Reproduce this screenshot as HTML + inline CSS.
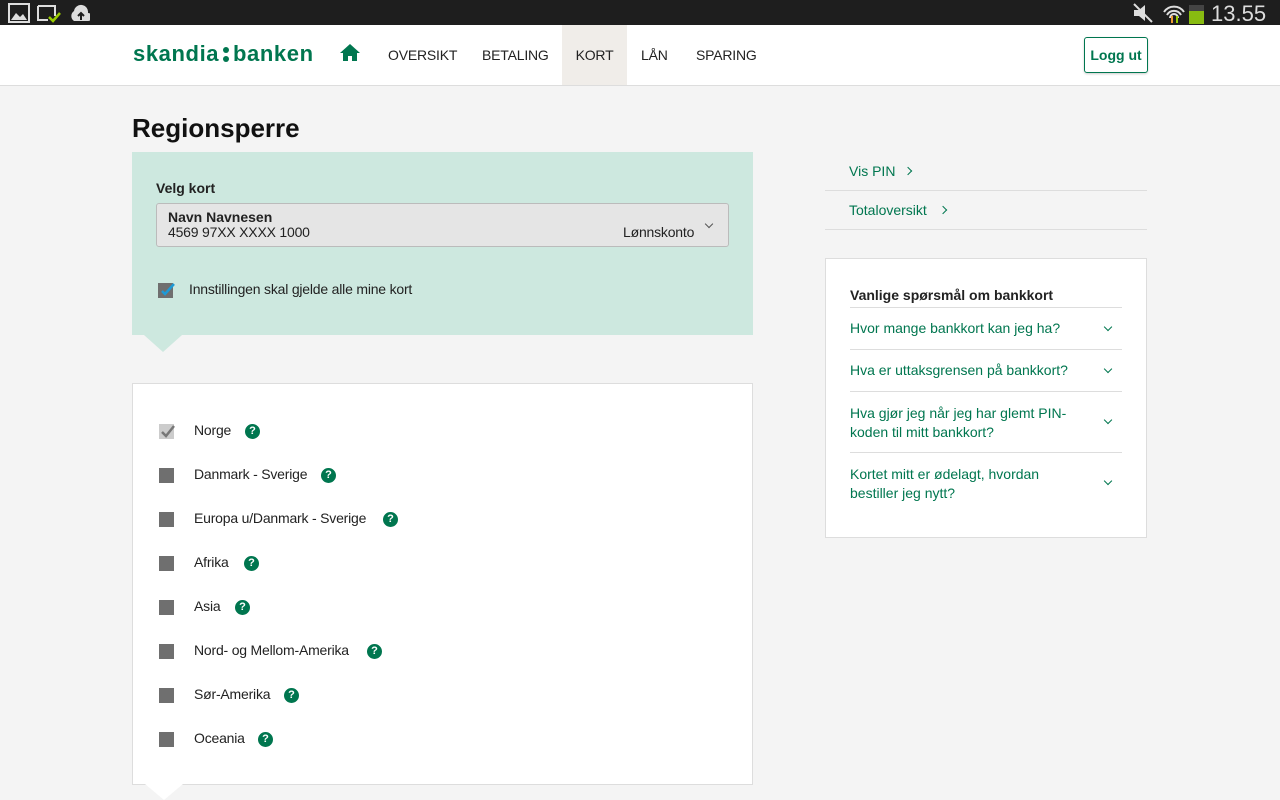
<!DOCTYPE html>
<html><head><meta charset="utf-8"><style>
*{box-sizing:border-box;margin:0;padding:0}
body{width:1280px;height:800px;overflow:hidden;background:#f4f4f4;font-family:"Liberation Sans",sans-serif;color:#222;position:relative}
.abs{position:absolute}
.sb{left:0;top:0;width:1280px;height:25px;background:#1e1e1e}
.hd{left:0;top:25px;width:1280px;height:61px;background:#fff;border-bottom:1px solid #ddd}
.logo{left:133px;top:41px;font-size:22px;font-weight:bold;color:#00764f;letter-spacing:0.6px}
.nav{top:25px;height:60px;line-height:60px;font-size:14px;color:#222;letter-spacing:-0.2px}
.g{color:#00764f}
.q{width:15px;height:15px;border-radius:50%;background:#00764f;color:#fff;font-size:11px;font-weight:bold;text-align:center;line-height:15px}
.cb{width:15px;height:15px;background:#6f6f6f}
.row{font-size:14px;letter-spacing:-0.2px}
.line{height:1px;background:#ddd}
.chev{width:6px;height:6px;border-right:1.5px solid #00764f;border-bottom:1.5px solid #00764f;transform:rotate(45deg)}
.chr{width:6px;height:6px;border-right:1.5px solid #00764f;border-top:1.5px solid #00764f;transform:rotate(45deg)}
</style></head><body>
<div class="abs sb"></div>
<svg class="abs" style="left:8px;top:3px" width="82" height="20"><rect x="1" y="1" width="20" height="18" fill="none" stroke="#ddd" stroke-width="2"/><path d="M3 17 L8 10 L12 14 L15 11 L19 17Z" fill="#ddd"/><path d="M30 3 H47 V13 M30 3 V17 H40" fill="none" stroke="#ddd" stroke-width="2"/><path d="M41 14 L45 18 L52 10" fill="none" stroke="#9c0" stroke-width="2.5"/><path d="M66 18 a6 6 0 0 1 0-10 a7 7 0 0 1 14 2 a4 4 0 0 1 0 8Z" fill="#ddd"/><path d="M73 17 V11 M70 13 L73 10 L76 13" stroke="#1e1e1e" stroke-width="2" fill="none"/></svg>
<svg class="abs" style="left:1132px;top:2px" width="80" height="22"><path d="M2 8 H7 L13 3 V19 L7 14 H2Z" fill="#ddd"/><path d="M2 2 L20 20" stroke="#ddd" stroke-width="2"/><path d="M32 10 a12 12 0 0 1 20 0 M35 13 a8 8 0 0 1 14 0 M38 16 a4 4 0 0 1 8 0" stroke="#ddd" stroke-width="2" fill="none"/><path d="M40 14 V21" stroke="#e93" stroke-width="2"/><path d="M45 14 V21" stroke="#9c0" stroke-width="2"/><rect x="57" y="3" width="15" height="19" fill="#444"/><rect x="57" y="9" width="15" height="13" fill="#8b1"/></svg>
<div class="abs" style="left:1211px;top:1px;font-size:22px;color:#ddd">13.55</div>
<div class="abs hd"></div>
<div class="abs logo">skandia</div>
<div class="abs" style="left:223px;top:47px;width:6px;height:6px;border-radius:50%;background:#00764f"></div>
<div class="abs" style="left:223px;top:56px;width:6px;height:6px;border-radius:50%;background:#00764f"></div>
<div class="abs logo" style="left:233px">banken</div>
<svg class="abs" style="left:339px;top:43px" width="22" height="18"><path d="M11 1 L1 10 H4 V18 H9 V13 H13 V18 H18 V10 H21 Z" fill="#00764f"/></svg>
<div class="abs nav" style="left:388px">OVERSIKT</div>
<div class="abs nav" style="left:482px">BETALING</div>
<div class="abs nav" style="left:562px;width:65px;background:#f0ede9;text-align:center">KORT</div>
<div class="abs nav" style="left:641px">LÅN</div>
<div class="abs nav" style="left:696px">SPARING</div>
<div class="abs" style="left:1084px;top:37px;width:64px;height:36px;border:1px solid #00764f;border-radius:3px;color:#00764f;font-weight:bold;font-size:14px;text-align:center;line-height:34px;box-shadow:0 1px 2px rgba(0,0,0,.2)">Logg ut</div>

<div class="abs" style="left:132px;top:113px;font-size:26px;font-weight:bold;color:#111">Regionsperre</div>
<div class="abs" style="left:132px;top:152px;width:621px;height:183px;background:#cde8df"></div>
<div class="abs" style="left:144px;top:335px;width:0;height:0;border-left:19px solid transparent;border-right:19px solid transparent;border-top:17px solid #cde8df"></div>
<div class="abs" style="left:156px;top:180px;font-size:14px;font-weight:bold">Velg kort</div>
<div class="abs" style="left:156px;top:203px;width:573px;height:44px;background:#e5e5e5;border:1px solid #bbb;border-radius:3px"></div>
<div class="abs" style="left:168px;top:209px;font-size:14px;font-weight:bold">Navn Navnesen</div>
<div class="abs row" style="left:168px;top:224px">4569 97XX XXXX 1000</div>
<div class="abs row" style="left:623px;top:224px">Lønnskonto</div>
<div class="abs chev" style="left:706px;top:221px;border-color:#555"></div>
<div class="abs cb" style="left:158px;top:283px"></div>
<svg class="abs" style="left:158px;top:279px" width="18" height="18"><path d="M4 12 L7 15 L16 5" stroke="#1e9ad6" stroke-width="2.5" fill="none"/></svg>
<div class="abs row" style="left:189px;top:281px">Innstillingen skal gjelde alle mine kort</div>

<div class="abs" style="left:132px;top:383px;width:621px;height:402px;background:#fff;border:1px solid #ddd"></div>
<div class="abs" style="left:145px;top:784px;width:0;height:0;border-left:19px solid transparent;border-right:19px solid transparent;border-top:16px solid #fff"></div>

<div class="abs cb" style="left:159px;top:424px;background:#ccc"></div>
<svg class="abs" style="left:159px;top:421px" width="18" height="18"><path d="M3 11 L7 15 L15 5" stroke="#777" stroke-width="2.5" fill="none"/></svg>
<div class="abs row" style="left:194px;top:422px">Norge</div><div class="abs q" style="left:245px;top:424px">?</div>
<div class="abs cb" style="left:159px;top:468px"></div><div class="abs row" style="left:194px;top:466px">Danmark - Sverige</div><div class="abs q" style="left:321px;top:468px">?</div>
<div class="abs cb" style="left:159px;top:512px"></div><div class="abs row" style="left:194px;top:510px">Europa u/Danmark - Sverige</div><div class="abs q" style="left:383px;top:512px">?</div>
<div class="abs cb" style="left:159px;top:556px"></div><div class="abs row" style="left:194px;top:554px">Afrika</div><div class="abs q" style="left:244px;top:556px">?</div>
<div class="abs cb" style="left:159px;top:600px"></div><div class="abs row" style="left:194px;top:598px">Asia</div><div class="abs q" style="left:235px;top:600px">?</div>
<div class="abs cb" style="left:159px;top:644px"></div><div class="abs row" style="left:194px;top:642px">Nord- og Mellom-Amerika</div><div class="abs q" style="left:367px;top:644px">?</div>
<div class="abs cb" style="left:159px;top:688px"></div><div class="abs row" style="left:194px;top:686px">Sør-Amerika</div><div class="abs q" style="left:284px;top:688px">?</div>
<div class="abs cb" style="left:159px;top:732px"></div><div class="abs row" style="left:194px;top:730px">Oceania</div><div class="abs q" style="left:258px;top:732px">?</div>

<div class="abs g" style="left:849px;top:163px;font-size:14px">Vis PIN</div><div class="abs chr" style="left:905px;top:168px"></div>
<div class="abs line" style="left:825px;top:190px;width:322px"></div>
<div class="abs g" style="left:849px;top:202px;font-size:14px">Totaloversikt</div><div class="abs chr" style="left:940px;top:207px"></div>
<div class="abs line" style="left:825px;top:229px;width:322px"></div>

<div class="abs" style="left:825px;top:258px;width:322px;height:280px;background:#fff;border:1px solid #ddd"></div>
<div class="abs" style="left:850px;top:287px;font-size:14px;font-weight:bold">Vanlige spørsmål om bankkort</div>
<div class="abs line" style="left:850px;top:307px;width:272px"></div>
<div class="abs g" style="left:850px;top:320px;font-size:14px">Hvor mange bankkort kan jeg ha?</div><div class="abs chev" style="left:1105px;top:324px"></div>
<div class="abs line" style="left:850px;top:349px;width:272px"></div>
<div class="abs g" style="left:850px;top:362px;font-size:14px">Hva er uttaksgrensen på bankkort?</div><div class="abs chev" style="left:1105px;top:366px"></div>
<div class="abs line" style="left:850px;top:391px;width:272px"></div>
<div class="abs g" style="left:850px;top:404px;font-size:14px;line-height:19px;width:240px">Hva gjør jeg når jeg har glemt PIN-koden til mitt bankkort?</div><div class="abs chev" style="left:1105px;top:417px"></div>
<div class="abs line" style="left:850px;top:452px;width:272px"></div>
<div class="abs g" style="left:850px;top:465px;font-size:14px;line-height:19px;width:240px">Kortet mitt er ødelagt, hvordan bestiller jeg nytt?</div><div class="abs chev" style="left:1105px;top:478px"></div>
</body></html>
